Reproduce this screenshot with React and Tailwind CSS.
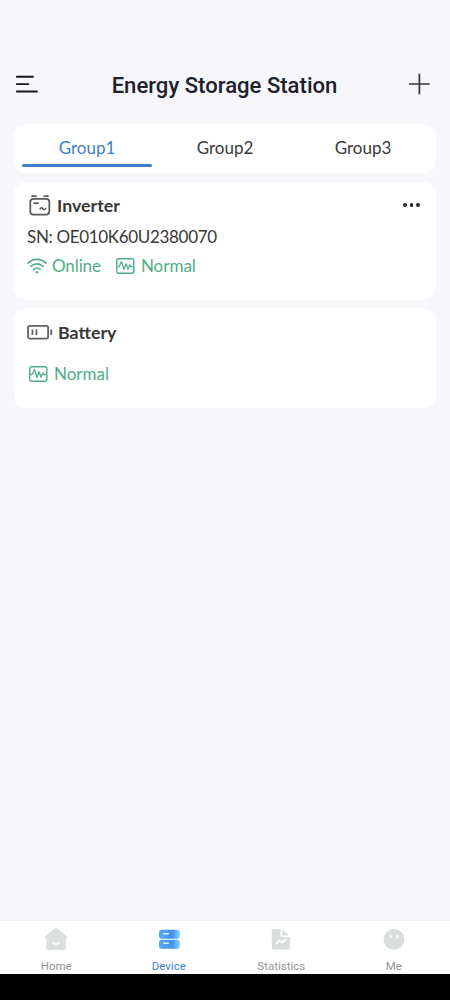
import React, { useState } from "react";

const groups = ["Group1", "Group2", "Group3"];

const MenuIcon = () => (
  <svg width="24" height="20" viewBox="0 0 24 20" fill="none" stroke="#17171f" strokeWidth="1.9" strokeLinecap="round">
    <path d="M2.8 2.7H19M2.8 10.1H14.4M2.8 17.5H23" />
  </svg>
);

const PlusIcon = () => (
  <svg width="22" height="22" viewBox="0 0 22 22" fill="none" stroke="#33333b" strokeWidth="1.7">
    <path d="M0.9 11H21.7M11.4 0.7V21.3" />
  </svg>
);

const InverterIcon = () => (
  <svg width="22" height="22" viewBox="0 0 22 22" fill="none" stroke="#58585a" strokeWidth="1.7">
    <rect x="1.3" y="4.8" width="19" height="15.9" rx="3.2" />
    <path d="M3 2.1H6.9M15.2 2.1H19.1" strokeWidth="1.8" strokeLinecap="round" />
    <path d="M4.4 9.2H9.8" strokeWidth="1.7" />
    <path d="M10.8 15.4C12 13.1 13 13.7 13.9 14.8C14.9 16.1 16.1 15.9 17 14.1" strokeWidth="1.5" />
  </svg>
);

const BatteryIcon = () => (
  <svg width="26" height="16" viewBox="0 0 26 16" fill="none" stroke="#626264" strokeWidth="1.8">
    <rect x="1.1" y="1.8" width="20" height="12.8" rx="1.8" />
    <path d="M5.4 5.4V11.1M9.4 5.4V11.1M24.2 5.4V11.1" />
  </svg>
);

const WifiIcon = () => (
  <svg width="20" height="16" viewBox="0 0 20 16" fill="none" stroke="#4fae86" strokeWidth="1.6" strokeLinecap="round">
    <path d="M1 5.1C6.2 0.2 13.8 0.2 19 5.1M3.9 8.3C7.4 5 12.6 5 16.1 8.3M6.8 11.4C8.7 9.7 11.3 9.7 13.2 11.4" />
    <circle cx="10" cy="14.2" r="1.2" fill="#4fae86" stroke="none" />
  </svg>
);

const PulseIcon = () => (
  <svg width="19" height="16" viewBox="0 0 19 16" fill="none" stroke="#4fae86" strokeWidth="1.4" strokeLinejoin="round">
    <rect x="0.8" y="0.8" width="17" height="14.4" rx="1.8" />
    <path d="M1.5 8.5H3.2L5.5 3.6L8 11.6L10.1 5.8L12 11.2L13.7 7L15 8.7H17.3" strokeWidth="1.3" />
  </svg>
);

const HomeIcon = () => (
  <svg width="24" height="24" viewBox="0 0 24 24">
    <path d="M11 1.1Q12 0.3 13 1.1L23 9.4Q23.6 11.2 21.9 11.3V20.5Q21.9 23 19.4 23H4.7Q2.2 23 2.2 20.5V11.3Q0.4 11.2 1 9.4Z" fill="#dce0df" />
    <path d="M9 15.8Q12 18.8 15 15.8" fill="none" stroke="#fff" strokeWidth="1.4" strokeLinecap="round" />
  </svg>
);

const DeviceIcon = () => (
  <svg width="24" height="24" viewBox="0 0 24 24">
    <defs>
      <linearGradient id="device" x1="0" y1="0" x2="1" y2="0">
        <stop offset="0" stopColor="#55a7f3" />
        <stop offset="0.65" stopColor="#4592ee" />
        <stop offset="1" stopColor="#8ed4fb" />
      </linearGradient>
    </defs>
    <rect x="2" y="2.7" width="21" height="9" rx="2.9" fill="url(#device)" />
    <rect x="2" y="12.7" width="21" height="9" rx="2.9" fill="url(#device)" />
    <path d="M6.7 6.7H11.2M6.7 16.2H11.2" stroke="#e5f5ff" strokeWidth="1.4" strokeLinecap="round" />
  </svg>
);

const StatisticsIcon = () => (
  <svg width="24" height="24" viewBox="0 0 24 24">
    <path d="M5 2H11.4V7.9Q11.4 10 13.5 10H20.9V20.2Q20.9 22.5 18.6 22.5H5Q2.8 22.5 2.8 20.2V4.2Q2.8 2 5 2ZM13.2 2.4L20.2 8.5H14.4Q13.2 8.5 13.2 7.3Z" fill="#d9dddc" />
    <path d="M7.6 16.6L10.8 13.6L13 15.5L16.8 12.4" fill="none" stroke="#fff" strokeWidth="1.9" strokeLinecap="round" strokeLinejoin="round" />
  </svg>
);

const MeIcon = () => (
  <svg width="24" height="24" viewBox="0 0 24 24">
    <circle cx="12" cy="12.3" r="10.4" fill="#d9dddc" />
    <path d="M8.8 8.6V10.5M15.5 8.6V10.5" stroke="#fff" strokeWidth="1.6" strokeLinecap="round" />
  </svg>
);

const navItems = [
  { name: "Home", Icon: HomeIcon },
  { name: "Device", Icon: DeviceIcon },
  { name: "Statistics", Icon: StatisticsIcon },
  { name: "Me", Icon: MeIcon },
];

const App = () => {
  const [group, setGroup] = useState("Group1");
  const [page, setPage] = useState("Device");

  return (
    <div className="flex h-[1000px] w-[450px] flex-col overflow-hidden bg-[#f6f6fb] font-['Lato',sans-serif] text-[#38383a]">
      <header className="mt-[59px] flex h-[50px] items-center justify-between pl-3.5 pr-5">
        <button aria-label="Menu" className="w-6"><MenuIcon /></button>
        <h1 className="ml-[3px] pt-0.5 font-['Roboto',sans-serif] text-[22.1px] font-medium leading-[26px] text-[#20202a]">Energy Storage Station</h1>
        <button aria-label="Add"><PlusIcon /></button>
      </header>

      <main className="flex flex-1 flex-col px-3.5 pt-[15px]">
        <div className="flex h-[49px] rounded-xl bg-white px-1">
          {groups.map((g) => (
            <button
              key={g}
              onClick={() => setGroup(g)}
              className={`flex flex-1 flex-col px-1 pt-3 text-[17px] leading-6 ${group === g ? "text-[#3b7fcb]" : ""}`}
            >
              <span className="w-full text-center">{g}</span>
              {group === g && <span className="mt-1 h-[2.5px] w-full rounded-full bg-[#3b7fcb]"></span>}
            </button>
          ))}
        </div>

        <section className="mt-[9px] h-[118px] rounded-xl bg-white px-[13px] pt-[11px]">
          <div className="flex h-6 items-center justify-between">
            <div className="flex items-center gap-1.5 pl-0.5">
              <InverterIcon />
              <h2 className="text-[17.8px] font-bold leading-6">Inverter</h2>
            </div>
            <button aria-label="More" className="mr-[3px] flex gap-[3px]">
              <span className="size-[3.6px] rounded-full bg-[#252525]"></span>
              <span className="size-[3.6px] rounded-full bg-[#252525]"></span>
              <span className="size-[3.6px] rounded-full bg-[#252525]"></span>
            </button>
          </div>
          <p className="mt-2 text-[17px] leading-6 tracking-[-0.33px]">SN: OE010K60U2380070</p>
          <div className="mt-[5px] flex h-6 items-center text-[17px] leading-6 text-[#4fae86]">
            <WifiIcon />
            <span className="ml-[5px] tracking-[-0.1px]">Online</span>
            <span className="ml-[15px] flex items-center gap-1.5"><PulseIcon />Normal</span>
          </div>
        </section>

        <section className="mt-2 h-[100px] rounded-xl bg-white px-[13px] pt-3">
          <div className="flex h-6 items-center gap-[5px]">
            <BatteryIcon />
            <h2 className="text-[17.8px] font-bold leading-6">Battery</h2>
          </div>
          <div className="mt-[18px] flex h-6 items-center gap-1.5 pl-0.5 text-[17px] leading-6 text-[#4fae86]">
            <PulseIcon />Normal
          </div>
        </section>
      </main>

      <nav className="flex h-[54px] border-t border-[#f0f0f4] bg-white font-['Roboto',sans-serif] text-[11.5px] leading-[14px] text-[#929294]">
        {navItems.map(({ name, Icon }) => (
          <button
            key={name}
            onClick={() => setPage(name)}
            className={`flex flex-1 flex-col items-center pt-1.5 ${page === name ? "text-[#3f82dc]" : ""}`}
          >
            <Icon />
            <span className="mt-2">{name}</span>
          </button>
        ))}
      </nav>
      <div className="h-[26px] bg-black"></div>
    </div>
  );
};

export default App;
